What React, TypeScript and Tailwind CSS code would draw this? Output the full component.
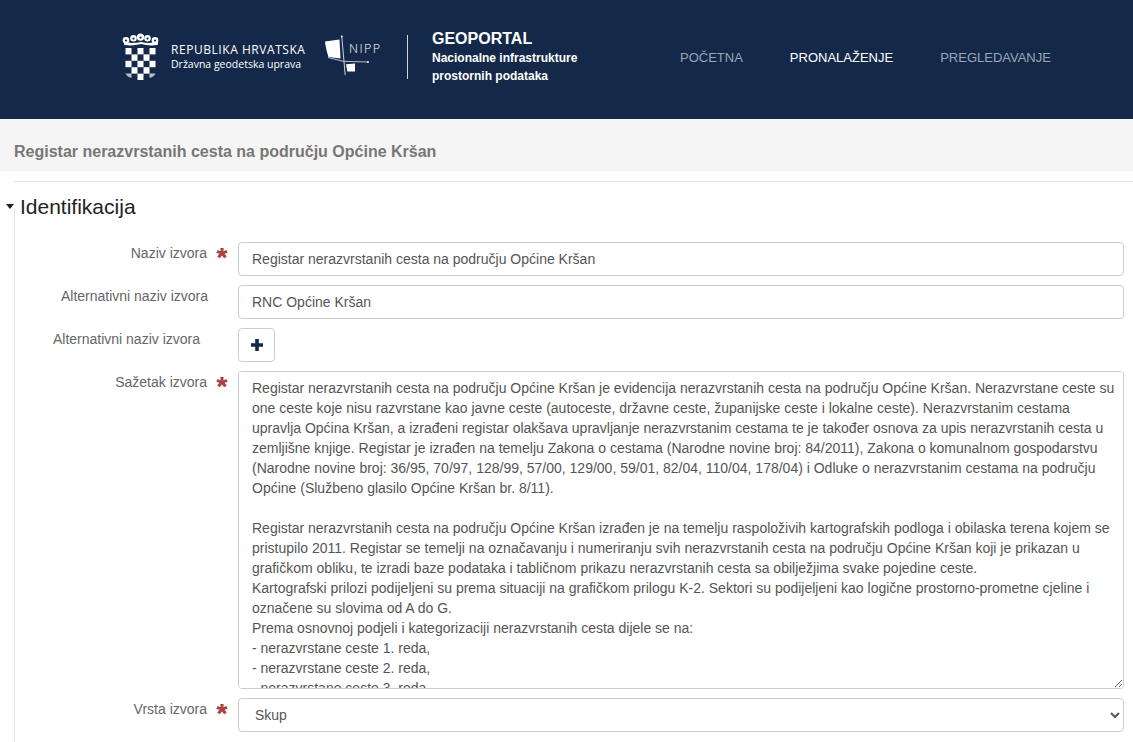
const summary = `Registar nerazvrstanih cesta na području Općine Kršan je evidencija nerazvrstanih cesta na području Općine Kršan. Nerazvrstane ceste su one ceste koje nisu razvrstane kao javne ceste (autoceste, državne ceste, županijske ceste i lokalne ceste). Nerazvrstanim cestama upravlja Općina Kršan, a izrađeni registar olakšava upravljanje nerazvrstanim cestama te je također osnova za upis nerazvrstanih cesta u zemljišne knjige. Registar je izrađen na temelju Zakona o cestama (Narodne novine broj: 84/2011), Zakona o komunalnom gospodarstvu (Narodne novine broj: 36/95, 70/97, 128/99, 57/00, 129/00, 59/01, 82/04, 110/04, 178/04) i Odluke o nerazvrstanim cestama na području Općine (Službeno glasilo Općine Kršan br. 8/11).

Registar nerazvrstanih cesta na području Općine Kršan izrađen je na temelju raspoloživih kartografskih podloga i obilaska terena kojem se pristupilo 2011. Registar se temelji na označavanju i numeriranju svih nerazvrstanih cesta na području Općine Kršan koji je prikazan u grafičkom obliku, te izradi baze podataka i tabličnom prikazu nerazvrstanih cesta sa obilježjima svake pojedine ceste.
Kartografski prilozi podijeljeni su prema situaciji na grafičkom prilogu K-2. Sektori su podijeljeni kao logične prostorno-prometne cjeline i označene su slovima od A do G.
Prema osnovnoj podjeli i kategorizaciji nerazvrstanih cesta dijele se na:
- nerazvrstane ceste 1. reda,
- nerazvrstane ceste 2. reda,
- nerazvrstane ceste 3. reda,
- ostale nerazvrstane ceste.







`;

function Star() {
  return (
    <svg viewBox="0 0 12 11" className="w-[12px] h-[11px] shrink-0 block text-[#a94442]" fill="currentColor">
      <path d="M4.3 0h3.4l-.3 3.3 3-1.4 1.3 2.9-3.1 1 2.2 2.6-2.6 1.9L6 7.5l-2.2 2.8-2.6-1.9 2.2-2.6-3.1-1 1.3-2.9 3 1.4z" />
    </svg>
  );
}

function Crest() {
  const squares = [
    [0, 0], [2, 0], [4, 0],
    [1, 1], [3, 1],
    [0, 2], [2, 2], [4, 2],
    [1, 3], [3, 3],
    [2, 4],
  ];
  const shields = [5, 12.5, 19.5, 26.5, 34];
  return (
    <svg width="40" height="48" viewBox="0 0 40 48" className="shrink-0">
      <g fill="#fff">
        {squares.map(([c, r]) => (
          <rect key={`${c}-${r}`} x={4.5 + c * 6} y={15 + r * 6.4} width="6" height="6.4" />
        ))}
        <path d="M4.5 47 M4.5 40.6h6v4.4c-3-.6-5-2.2-6-4.4zM28.5 40.6h6c-1 2.2-3 3.8-6 4.4z" opacity="0.7" />
        <path d="M3 8.5c5 1.6 9 2 17 .6 7 1.4 12 1 17-.6v3.2c-5 1.2-11 .8-17-.6-6 1.4-12 1.8-17 .6z" />
        {shields.map((x, i) => (
          <g key={i}>
            <circle cx={x} cy={i === 2 ? 4.2 : i === 0 || i === 4 ? 7.2 : 5.2} r={i === 2 ? 3.6 : 3.3} />
            <circle cx={x} cy={i === 2 ? 4.6 : i === 0 || i === 4 ? 7.5 : 5.6} r="1.1" fill="#142949" />
          </g>
        ))}
      </g>
    </svg>
  );
}

function NippLogo() {
  return (
    <svg width="60" height="44" viewBox="325 36 60 44" className="shrink-0">
      <path d="M325 42.5L339.5 40.5L340.5 59.5L328.5 58C326.8 53 325.5 47.5 325 42.5z" fill="#fff" />
      <path d="M341.8 37.5L345.2 76" stroke="#dfe3ea" strokeWidth="0.9" fill="none" />
      <circle cx="341.8" cy="37.5" r="0.9" fill="#fff" />
      <path d="M328 58.5L343 62.3L368 63" stroke="#c9ced8" strokeWidth="0.9" fill="none" />
      <circle cx="368" cy="63" r="0.9" fill="#fff" />
      <path d="M346 65.3L355 64.5V72.5H347.3z" fill="#fff" />
      <text x="349" y="54" fill="#fff" fontSize="12.5" letterSpacing="1.4" fontFamily="Open Sans, sans-serif" fontWeight="300">NIPP</text>
    </svg>
  );
}

function Row({ label, required, pr, children }: { label: string; required?: boolean; pr: string; children: React.ReactNode }) {
  return (
    <div className="flex">
      <div className={`w-[223px] shrink-0 flex justify-end items-start pt-[1px] ${pr}`}>
        <span className="text-[14px] leading-5 text-[#666]">{label}</span>
        {required && <span className="ml-[9px] mt-[5px]"><Star /></span>}
      </div>
      <div className="flex-1 min-w-0">{children}</div>
    </div>
  );
}

const inputCls = "w-full h-[34px] rounded border border-[#ccc] bg-white px-[13px] text-[14px] text-[#555] flex items-center";

export default function App() {
  return (
    <div className="h-[742px] overflow-hidden bg-white font-['Liberation_Sans',Arial,sans-serif]">
      <header className="h-[119px] bg-[#142949] flex items-center pb-[5px] text-white">
        <div className="ml-[121px] flex items-center">
          <Crest />
          <div className="ml-[10px] w-[154px] text-white font-['Open_Sans',sans-serif]">
            <div className="text-[12px] leading-[15px] tracking-[0.55px] whitespace-nowrap">REPUBLIKA HRVATSKA</div>
            <div className="text-[10.5px] leading-[15px] tracking-[0px] whitespace-nowrap">Državna geodetska uprava</div>
          </div>
          <NippLogo />
          <div className="ml-[22px] w-px h-[44px] bg-white/80" />
          <div className="ml-[24px] w-[170px] font-bold">
            <div className="text-[16px] leading-[18px] mb-[1px]">GEOPORTAL</div>
            <div className="text-[12px] leading-[18px]">Nacionalne infrastrukture<br />prostornih podataka</div>
          </div>
        </div>
        <nav className="ml-[78px] mb-[-1px] flex gap-[47px] text-[13px] leading-[18px] text-[#9aa5b5]">
          <span>POČETNA</span>
          <span className="text-white">PRONALAŽENJE</span>
          <span>PREGLEDAVANJE</span>
        </nav>
      </header>
      <div className="h-[52px] bg-[#f5f5f5] px-[14px] pt-[24px]">
        <div className="text-[16px] leading-[18px] font-bold text-[#777]">Registar nerazvrstanih cesta na području Općine Kršan</div>
      </div>
      <div className="ml-[14px] mt-[10px] border-t border-[#e7e7e7]" />
      <div className="relative flex items-center h-[49px] pl-[6px]">
        <span className="absolute left-[14px] top-[26px] bottom-0 w-px bg-[#e7e7e7]" />
        <span className="relative w-0 h-0 border-x-[4.5px] border-x-transparent border-t-[5px] border-t-[#222]" />
        <span className="relative ml-[5px] pl-[1px] text-[21px] text-[#222] bg-white">Identifikacija</span>
      </div>
      <div className="ml-[14px] border-l border-[#e7e7e7] pr-[9px] pt-[11px] flex flex-col gap-[9px] h-[600px]">
        <Row label="Naziv izvora" required pr="pr-[10px]"><div className={inputCls}>Registar nerazvrstanih cesta na području Općine Kršan</div></Row>
        <Row label="Alternativni naziv izvora" pr="pr-[30px]"><div className={inputCls}>RNC Općine Kršan</div></Row>
        <Row label="Alternativni naziv izvora" pr="pr-[38px]">
          <button className="w-[37px] h-[34px] rounded border border-[#ccc] bg-white flex items-center justify-center">
            <svg width="12" height="12" viewBox="0 0 12 12" fill="#13294b"><path d="M4.2 0h3.6v4.2H12v3.6H7.8V12H4.2V7.8H0V4.2h4.2z" /></svg>
          </button>
        </Row>
        <Row label="Sažetak izvora" required pr="pr-[10px]">
          <textarea
            readOnly
            value={summary}
            className="block w-full h-[318px] rounded border border-[#ccc] bg-white pl-[13px] pr-[8px] pt-[6px] text-[14px] leading-[20px] text-[#555] outline-none resize-y overflow-y-scroll [&::-webkit-scrollbar]:w-[9px] [&::-webkit-scrollbar-track]:bg-[#f1f1f1] [&::-webkit-scrollbar-thumb]:bg-[#c1c1c1] [&::-webkit-scrollbar-corner]:bg-[#f1f1f1]"
          />
        </Row>
        <Row label="Vrsta izvora" required pr="pr-[10px]">
          <select defaultValue="Skup" className="block w-full h-[34px] rounded border border-[#ccc] bg-white px-[12px] text-[14px] text-[#555]">
            <option>Skup</option>
          </select>
        </Row>
      </div>
    </div>
  );
}
